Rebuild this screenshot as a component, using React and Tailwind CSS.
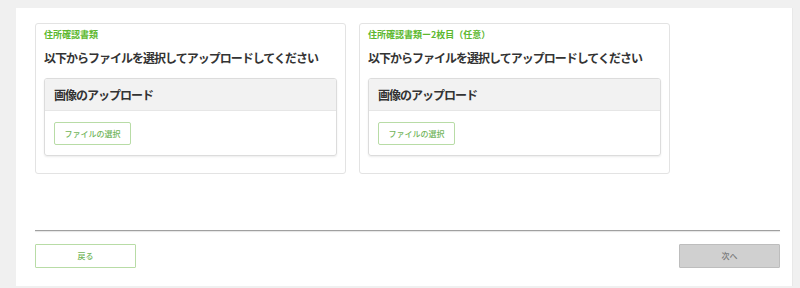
export default function App() {
  const font = { fontFamily: '"Noto Sans CJK JP", "Noto Sans", sans-serif' };
  const Card = ({ label }) => (
    <div className="w-[311px] h-[151px] border border-[#e3e3e3] rounded-[3px] bg-white px-[8px] pt-[4px]">
      <div className="h-[14px] leading-[14px] text-[9px] text-[#5cb82e] font-bold">{label}</div>
      <div className="mt-[7px] h-[18px] leading-[18px] text-[12px] tracking-[-1px] font-bold text-[#333]">
        以下からファイルを選択してアップロードしてください
      </div>
      <div className="mt-[11px] h-[78px] border border-[#dcdcdc] rounded-[3px] shadow-[0_1px_2px_rgba(0,0,0,0.08)] overflow-hidden">
        <div className="h-[32px] bg-[#f2f2f2] border-b border-[#e6e6e6] flex items-center pl-[9px] text-[12px] tracking-[-1px] font-bold text-[#333]">
          画像のアップロード
        </div>
        <div className="pt-[11px] pl-[9px]">
          <button className="w-[77px] h-[23px] border border-[#b8dca6] rounded-[2px] bg-white text-[8px] font-medium text-[#72b55a] flex items-center justify-center">
            ファイルの選択
          </button>
        </div>
      </div>
    </div>
  );
  return (
    <div style={font} className="w-[800px] h-[288px] bg-[#f0f0f0] pt-[8px] pl-[16px] pr-[7px]">
      <div className="h-[278px] bg-white pt-[15px] pl-[19px] pr-[12px] border-r border-[#e8e8e8]">
        <div className="flex gap-[13px]">
          <Card label="住所確認書類" />
          <Card label="住所確認書類ー2枚目（任意）" />
        </div>
        <div className="mt-[56px] h-[1px] bg-[#a0a0a0] shadow-[0_1px_1px_rgba(0,0,0,0.12)]" />
        <div className="mt-[13px] flex justify-between">
          <button className="w-[101px] h-[24px] border border-[#b8dca6] rounded-[1px] bg-white text-[8px] font-medium text-[#72b55a] flex items-center justify-center">
            戻る
          </button>
          <button className="w-[101px] h-[24px] border border-[#bdbdbd] rounded-[1px] bg-[#d0d0d0] text-[8px] font-medium text-[#7a7a7a] flex items-center justify-center">
            次へ
          </button>
        </div>
      </div>
    </div>
  );
}
